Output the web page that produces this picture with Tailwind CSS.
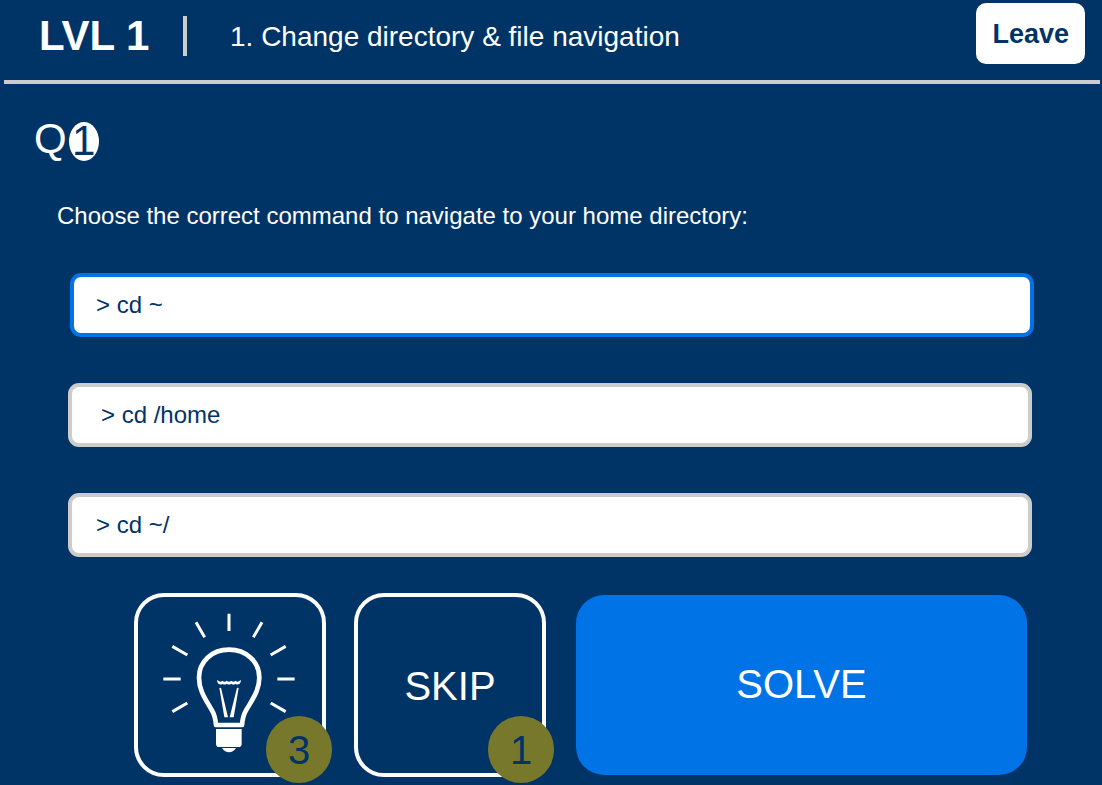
<!DOCTYPE html>
<html lang="en">
<head>
<meta charset="utf-8">
<meta name="viewport" content="width=device-width, initial-scale=1">
<title>Level 1 – Change directory &amp; file navigation</title>
<script src="https://cdn.jsdelivr.net/npm/@tailwindcss/browser@4"></script>
</head>
<body class="min-h-screen bg-[#003466] font-['Liberation_Sans',Arial,sans-serif] text-white">
  <header class="mx-1 mr-[2px] flex min-h-[84px] items-start justify-between border-b-4 border-[#cccccc] pr-[15px] pl-[35px]">
    <div class="flex h-[72px] items-center">
      <h1 class="w-36 text-[42px] leading-[48px] font-bold whitespace-nowrap">LVL 1</h1>
      <span class="h-10 w-1 bg-[#cccccc]"></span>
      <p class="ml-[43px] pt-[2px] text-[28px] leading-8">1. Change directory &amp; file navigation</p>
    </div>
    <button type="button" class="mt-[3px] h-[61px] rounded-[10px] bg-white px-4 text-[27px] leading-8 font-bold text-[#003466]">Leave</button>
  </header>

  <main>
    <h2 class="mt-[31px] flex items-center gap-[2px] pl-[34px] text-[42px] leading-[48px]">
      <span>Q</span>
      <span class="mt-1 flex h-[39px] w-[30px] items-center justify-center rounded-[50%] bg-white text-[#003466]">1</span>
    </h2>

    <form class="pt-[39px]">
      <fieldset>
        <legend class="pl-[57px] text-2xl leading-7">Choose the correct command to navigate to your home directory:</legend>
        <div class="mt-[43px] flex flex-col gap-[46px] pr-[70px] pl-[68px] text-2xl text-[#003466]">
          <label class="-mr-[2px] ml-[2px] flex h-16 items-center rounded-[11px] border-4 border-[#0073e6] bg-white pl-[22px]">
            <input type="radio" name="answer" class="sr-only" checked>&gt; cd ~
          </label>
          <label class="flex h-16 items-center rounded-[11px] border-4 border-[#cccccc] bg-white pl-[29px]">
            <input type="radio" name="answer" class="sr-only">&gt; cd /home
          </label>
          <label class="flex h-16 items-center rounded-[11px] border-4 border-[#cccccc] bg-white pl-6">
            <input type="radio" name="answer" class="sr-only">&gt; cd ~/
          </label>
        </div>
      </fieldset>

      <div class="mt-9 flex gap-7 pr-[75px] pb-2 pl-[134px] text-[40px] leading-[46px]">
        <div class="relative h-[184px] w-48 shrink-0">
          <button type="button" aria-label="Hint" class="flex size-full items-start justify-center rounded-[30px] border-4 border-white pt-2">
            <svg viewBox="0 0 420 465" class="h-[155px] w-[140px]" fill="none" stroke="#fff" aria-hidden="true">
              <g stroke-width="9">
                <path d="M207 26V78M108 52L134 97M306 52L280 97M37 124L82 150M377 124L332 150M10 222H62M352 222H404M37 320L82 294M377 320L332 294"/>
              </g>
              <path stroke-width="14" stroke-linejoin="round" d="M168 360C167 346 164 329 154 313C136 282 117 256 117 218C117 168 157 134 207 134C257 134 298 168 298 218C298 256 278 282 260 313C250 329 247 346 246 360Z"/>
              <path fill="#fff" stroke="none" d="M171 225L178 229Q183 232 187 227Q194 233 200 227Q207 233 214 227Q220 233 227 227Q231 232 236 229L243 225Q242 237 235 238Q230 240 227 236Q220 241 214 236Q207 241 200 236Q194 241 187 236Q184 240 179 238Q172 237 171 225Z"/>
              <path fill="#fff" stroke="none" d="M178 249L183 248L204 337H193ZM231 248L236 249L221 337H209Z"/>
              <path fill="#fff" stroke="none" d="M168 372H245V416Q245 426 235 426H178Q168 426 168 416ZM186 429H228Q219 442 207 442Q195 442 186 429Z"/>
            </svg>
          </button>
          <span class="absolute -right-[6px] -bottom-[6px] flex h-[67px] w-[66px] items-center justify-center rounded-full bg-[#78782d] text-[#003466]">3</span>
        </div>
        <div class="relative h-[184px] w-48 shrink-0">
          <button type="button" class="size-full rounded-[30px] border-4 border-white pt-[2px]">SKIP</button>
          <span class="absolute -right-[8px] -bottom-[6px] flex h-[67px] w-[66px] items-center justify-center rounded-full bg-[#78782d] text-[#003466]">1</span>
        </div>
        <button type="submit" class="my-[2px] ml-[2px] flex-1 rounded-[28px] bg-[#0073e6] pb-[2px]">SOLVE</button>
      </div>
    </form>
  </main>
</body>
</html>
